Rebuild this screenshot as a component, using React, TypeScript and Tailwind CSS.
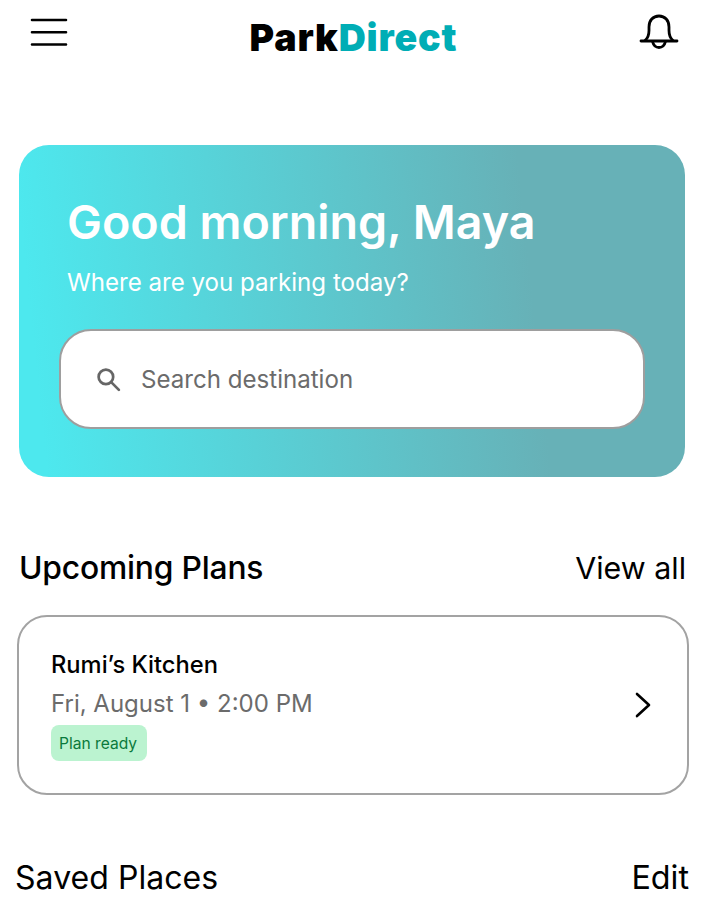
import React from 'react';

const MenuIcon = () => (
  <svg width="38" height="30" viewBox="0 0 38 30" fill="none" stroke="#000" strokeWidth="2.6" strokeLinecap="round">
    <path d="M2 3h34M2 15.300h34M2 27.500h34" />
  </svg>
);

const BellIcon = () => (
  <svg width="40" height="40" viewBox="0 0 40 40" fill="none" stroke="#000" strokeWidth="2.8" strokeLinecap="round" strokeLinejoin="round">
    <path d="M2 27h36" />
    <path d="M6 26.500c3-2.500 4-6 4-10V13C10 6.500 14 2 20 2s10 4.500 10 11v3.500c0 4 1 7.500 4 10" />
    <path d="M13.500 27.500c1 4 3.800 6 6.500 6s5.500-2 6.500-6" />
  </svg>
);

const SearchIcon = () => (
  <svg width="27" height="27" viewBox="0 0 26 26" fill="none" stroke="#666" strokeWidth="2.600" strokeLinecap="round">
    <circle cx="10.500" cy="10.500" r="7" />
    <path d="M15.800 15.800 23 23" />
  </svg>
);

const ChevronIcon = () => (
  <svg width="16" height="26" viewBox="0 0 16 26" fill="none" stroke="#000" strokeWidth="2.600" strokeLinecap="round" strokeLinejoin="round">
    <path d="M2 2l12 11L2 24" />
  </svg>
);

export default function App() {
  return (
    <div className="h-[905px] overflow-hidden bg-white font-['Inter',sans-serif] text-black">
      {/* Header */}
      <header className="flex h-[145px] items-start justify-between pl-[30px] pr-[26px]">
        <div className="pt-[17px]">
          <MenuIcon />
        </div>
        <div className="pt-[16px] text-[37.5px] leading-[44px] font-black tracking-[0.85px]">
          <span>Park</span>
          <span className="text-[#00adb5]">Direct</span>
        </div>
        <div className="pt-[14px]">
          <BellIcon />
        </div>
      </header>

      {/* Hero */}
      <section className="mx-[19px] h-[332px] w-[666px] rounded-[30px] bg-[linear-gradient(84deg,#4de8ee_4%,#67b1b7_76%)] px-[40px] pt-[49px]">
        <h1 className="pl-[8px] text-[46.6px] leading-[56px] font-semibold text-white">Good morning, Maya</h1>
        <p className="mt-[19px] pl-[8px] text-[24.1px] leading-[28px] text-white">Where are you parking today?</p>
        <div className="mt-[32px] flex h-[100px] items-center rounded-[32px] border-2 border-[#9e9e9e] bg-white pl-[34px]">
          <SearchIcon />
          <span className="ml-[19px] pt-[2px] text-[24.1px] text-[#6b6b6b]">Search destination</span>
        </div>
      </section>

      {/* Upcoming plans */}
      <div className="mt-[72px] flex items-center justify-between pl-[19px] pr-[19px] leading-[38px]">
        <h2 className="text-[31.8px] font-[450] tracking-[-0.2px]">Upcoming Plans</h2>
        <span className="text-[30.4px]">View all</span>
      </div>
      <div className="ml-[17px] mt-[28px] flex h-[180px] w-[672px] items-center justify-between rounded-[30px] border-2 border-[#a3a3a3] pl-[32px] pr-[36px]">
        <div>
          <div className="pt-[2px] text-[23.7px] leading-[28px] font-medium">Rumi’s Kitchen</div>
          <div className="mt-[10px] text-[24px] leading-[30px] text-[#6b6b6b]">Fri, August 1 • 2:00 PM</div>
          <div className="mt-[6px] w-[96px] rounded-[8px] bg-[#bbf3d0] px-[8px] pb-[8px] pt-[10px] text-[15.6px] leading-[18px] text-[#0a7a3c]">
            Plan ready
          </div>
        </div>
        <ChevronIcon />
      </div>

      {/* Saved places */}
      <div className="mt-[64px] flex items-center justify-between pl-[15px] pr-[16px] leading-[38px]">
        <h2 className="text-[32px] tracking-[0.05px]">Saved Places</h2>
        <span className="text-[32.3px]">Edit</span>
      </div>
    </div>
  );
}
